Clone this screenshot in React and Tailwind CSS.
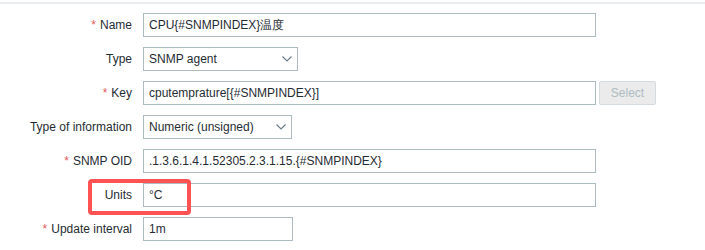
import React from "react";

const labelCls = "w-[133px] shrink-0 pr-[1px] text-right text-[12px] text-[#1f2c33]";
const boxCls = "h-6 border border-[#acbbc2] bg-white pl-[5px] text-[12px] text-[#1f2c33] flex items-center";

function Label({ text, req }) {
  return (
    <div className={labelCls}>
      {req && <span className="text-[#e45959] mr-[4px]">*</span>}
      {text}
    </div>
  );
}

function Chevron() {
  return (
    <svg width="10" height="6" viewBox="0 0 10 6" className="mr-[5px]">
      <polyline points="0.5,0.5 5,5 9.5,0.5" fill="none" stroke="#6d7f88" strokeWidth="1.2" />
    </svg>
  );
}

function Row({ label, req, children }) {
  return (
    <div className="flex h-6 items-center gap-[10px]">
      <Label text={label} req={req} />
      {children}
    </div>
  );
}

export default function App() {
  return (
    <div className="relative h-[250px] w-[705px] bg-white font-['Liberation_Sans',Arial,sans-serif]">
      <div className="mt-[2px] border-t-2 border-[#ebeef0]" />
      <div className="flex flex-col gap-[10px] pt-[9px]">
        <Row label="Name" req>
          <div className={`${boxCls} w-[453px]`}>CPU{"{#SNMPINDEX}"}温度</div>
        </Row>
        <Row label="Type">
          <div className={`${boxCls} w-[155px] justify-between`}>
            <span>SNMP agent</span>
            <Chevron />
          </div>
        </Row>
        <Row label="Key" req>
          <div className={`${boxCls} w-[453px]`}>cputemprature[{"{#SNMPINDEX}"}]</div>
          <div className="-ml-[7px] flex h-6 w-[57px] items-center justify-center rounded-[2px] border border-[#d4dadd] bg-[#ebebeb] text-[12px] text-[#aebcc4]">
            Select
          </div>
        </Row>
        <Row label="Type of information">
          <div className={`${boxCls} w-[149px] justify-between`}>
            <span>Numeric (unsigned)</span>
            <Chevron />
          </div>
        </Row>
        <Row label="SNMP OID" req>
          <div className={`${boxCls} w-[453px]`}>.1.3.6.1.4.1.52305.2.3.1.15.{"{#SNMPINDEX}"}</div>
        </Row>
        <Row label="Units">
          <div className={`${boxCls} w-[453px]`}>°C</div>
        </Row>
        <Row label="Update interval" req>
          <div className={`${boxCls} w-[150px]`}>1m</div>
        </Row>
      </div>
      <div className="absolute left-[88px] top-[177px] h-[36px] w-[103px] rounded-[4px] border-[4px] border-[#ff5353]" />
    </div>
  );
}
